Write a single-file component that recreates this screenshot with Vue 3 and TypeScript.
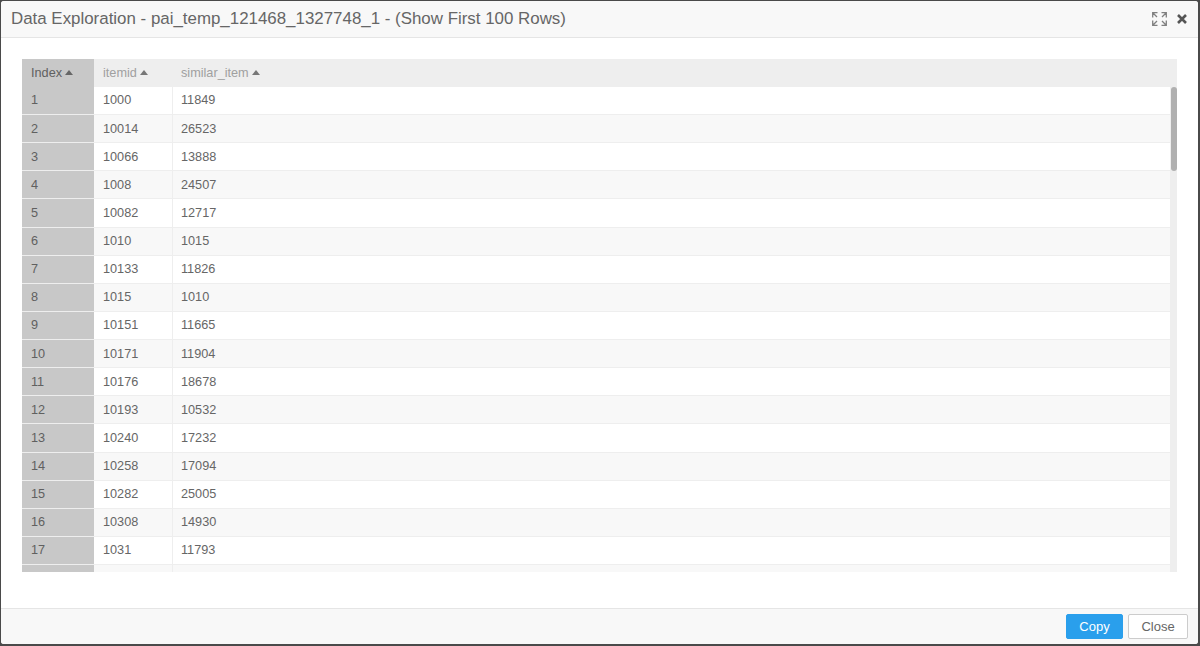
<script setup lang="ts">
const rows: [number, string, string][] = [
  [1, '1000', '11849'], [2, '10014', '26523'], [3, '10066', '13888'], [4, '1008', '24507'],
  [5, '10082', '12717'], [6, '1010', '1015'], [7, '10133', '11826'], [8, '1015', '1010'],
  [9, '10151', '11665'], [10, '10171', '11904'], [11, '10176', '18678'], [12, '10193', '10532'],
  [13, '10240', '17232'], [14, '10258', '17094'], [15, '10282', '25005'], [16, '10308', '14930'],
  [17, '1031', '11793'], [18, '', '']
]
</script>

<template>
  <div class="backdrop">
    <div class="modal">
      <header class="head">
        <h4 class="title">Data Exploration - pai_temp_121468_1327748_1 - (Show First 100 Rows)</h4>
        <div class="tools">
          <svg class="expand" width="15" height="14" viewBox="0 0 15 14" fill="none" stroke="#808080" stroke-width="1.3">
            <path d="M5.5 .7H.7V5.5M1 1l4 4M9.5 .7h4.8V5.5M14 1l-4 4M5.5 13.3H.7V8.5M1 13l4-4M9.5 13.3h4.8V8.5M14 13l-4-4" />
          </svg>
          <svg width="10" height="10" viewBox="0 0 10 10" stroke="#555" stroke-width="2.6" fill="none">
            <path d="M1 1l8 8M9 1l-8 8" />
          </svg>
        </div>
      </header>
      <main class="body">
        <div class="table">
          <div class="main">
            <div class="row hrow">
              <div class="cell idx">Index <i class="caret dark"></i></div>
              <div class="cell col-a muted">itemid <i class="caret"></i></div>
              <div class="cell col-b muted">similar_item <i class="caret"></i></div>
            </div>
            <div v-for="r in rows" :key="r[0]" class="row" :class="{ even: r[0] % 2 === 0 }">
              <div class="cell idx">{{ r[1] ? r[0] : '' }}</div>
              <div class="cell col-a">{{ r[1] }}</div>
              <div class="cell col-b">{{ r[2] }}</div>
            </div>
          </div>
          <div class="track"><div class="thumb"></div></div>
        </div>
      </main>
      <footer class="foot">
        <button class="btn primary">Copy</button>
        <button class="btn">Close</button>
      </footer>
    </div>
  </div>
</template>

<style>
html, body { margin: 0; background: #4a4a4a; }
</style>

<style scoped>
.backdrop {
  width: 1200px;
  height: 646px;
  box-sizing: border-box;
  padding: 1px 2px 2px 1px;
  overflow: hidden;
  font-family: "Liberation Sans", Arial, sans-serif;
}
.modal {
  height: 100%;
  display: flex;
  flex-direction: column;
  background: #fff;
  border-radius: 3px;
  overflow: hidden;
}
.head {
  height: 36px;
  flex: none;
  display: flex;
  align-items: center;
  justify-content: space-between;
  padding: 0 11px 0 10px;
  background: #f8f8f8;
  border-bottom: 1px solid #e5e5e5;
}
.title { margin: 0; font-size: 16.9px; font-weight: 400; color: #666; }
.tools { display: flex; align-items: center; gap: 10px; }
.body { flex: 1; min-height: 0; padding: 21px 21px 0; overflow: hidden; }
.table {
  width: 1155px;
  height: 513px;
  display: flex;
  overflow: hidden;
  background: #fff;
}
.main { flex: 1; min-width: 0; }
.row {
  height: 27.125px;
  box-sizing: content-box;
  display: flex;
  border-bottom: 1px solid #eee;
  font-size: 12.7px;
  color: #666;
}
.row.even { background: #f8f8f8; }
.hrow { background: #eee; border-bottom: 0; height: 27.9px; }
.hrow .cell { padding-bottom: 0.6px; }
.cell { display: flex; align-items: center; gap: 3px; padding-left: 9px; box-sizing: border-box; }
.idx { width: 72px; background: #c8c8c8; color: #606060; padding-left: 9px; }
.col-a { width: 79px; border-right: 1px solid #eee; }
.col-b { flex: 1; padding-left: 8px; }
.muted { color: #a0a0a0; }
.caret {
  width: 0;
  height: 0;
  border-left: 4.5px solid transparent;
  border-right: 4.5px solid transparent;
  border-bottom: 5px solid #777;
}
.caret.dark { border-bottom-color: #666; }
.track { width: 7px; background: #eee; position: relative; }
.thumb {
  position: absolute;
  top: 28px;
  left: 1px;
  width: 6px;
  height: 84px;
  border-radius: 3px;
  background: #b0b0b0;
}
.foot {
  height: 35px;
  flex: none;
  display: flex;
  align-items: center;
  justify-content: flex-end;
  gap: 5px;
  padding: 0 10px;
  background: #f8f8f8;
  border-top: 1px solid #e5e5e5;
}
.btn {
  height: 25px;
  width: 60px;
  padding: 0;
  border: 1px solid #ccc;
  border-radius: 2px;
  background: #fff;
  color: #666;
  font: 13px "Liberation Sans", Arial, sans-serif;
}
.btn.primary { width: 57px; background: #2a9fec; border-color: #2a9fec; color: #fff; }
</style>
